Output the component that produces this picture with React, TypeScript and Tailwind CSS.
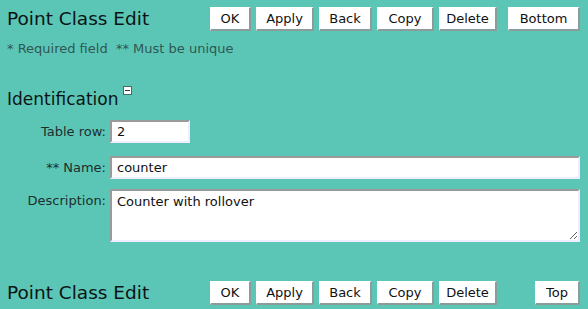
const buttons = ["OK", "Apply", "Back", "Copy", "Delete"];

function Btn({ label, w }: { label: string; w: string }) {
  return (
    <button
      className={`h-[24px] ${w} bg-white text-[13px] text-[#111] border-r-2 border-b-2 border-[#8c9c99] border-t border-l border-t-white border-l-white`}
    >
      {label}
    </button>
  );
}

const widths: Record<string, string> = {
  OK: "w-[41px]",
  Apply: "w-[58px]",
  Back: "w-[53px]",
  Copy: "w-[57px]",
  Delete: "w-[58px]",
  Bottom: "w-[72px]",
  Top: "w-[45px]",
};

function ButtonRow({ last }: { last: string }) {
  return (
    <div className="flex items-center h-[24px]">
      <h1 className="text-[18.5px] text-[#0b1414] w-[203px] leading-none">Point Class Edit</h1>
      <div className="flex gap-[5px]">
        {buttons.map((b) => (
          <Btn key={b} label={b} w={widths[b]} />
        ))}
      </div>
      <div className="flex-1 flex justify-end">
        <Btn label={last} w={widths[last]} />
      </div>
    </div>
  );
}

const field =
  "bg-white border-2 border-t-[#9a9a9a] border-l-[#9a9a9a] border-r-[#eef] border-b-[#eef] px-[5px] text-[13px] text-[#111] outline-none";

export default function App() {
  return (
    <div
      className="w-[588px] h-[309px] bg-[#5cc6b6] pl-[7px] pr-[8px] pt-[7px] overflow-hidden"
      style={{ fontFamily: '"DejaVu Sans", sans-serif' }}
    >
      <ButtonRow last="Bottom" />
      <p className="mt-[10px] text-[13px] text-[#2f5753] leading-[16px]">
        * Required field &nbsp;** Must be unique
      </p>

      <div className="mt-[31px] flex items-start">
        <h2 className="text-[17px] text-[#0b1414] leading-[22px]">Identification</h2>
        <span className="ml-[5px] mt-[-2px] w-[9px] h-[9px] bg-white border border-[#4a6b68] flex items-center justify-center">
          <span className="w-[5px] h-[1px] bg-[#333]" />
        </span>
      </div>

      <div className="mt-[10px] grid grid-cols-[99px_1fr] gap-x-[4px] gap-y-[10px] text-[13px]">
        <label className="text-right leading-[23px] text-[#1c2e2e]">Table row:</label>
        <div>
          <input defaultValue="2" className={`w-[80px] h-[23px] ${field}`} />
        </div>
        <label className="mt-[3px] text-right leading-[23px] text-[#1c2e2e]">** Name:</label>
        <input defaultValue="counter" className={`mt-[3px] w-full h-[23px] ${field}`} />
        <label className="text-right leading-[23px] text-[#1c2e2e]">Description:</label>
        <textarea
          defaultValue="Counter with rollover"
          className={`w-full h-[53px] py-[1px] ${field}`}
        />
      </div>

      <div className="mt-[39px]">
        <ButtonRow last="Top" />
      </div>
    </div>
  );
}
